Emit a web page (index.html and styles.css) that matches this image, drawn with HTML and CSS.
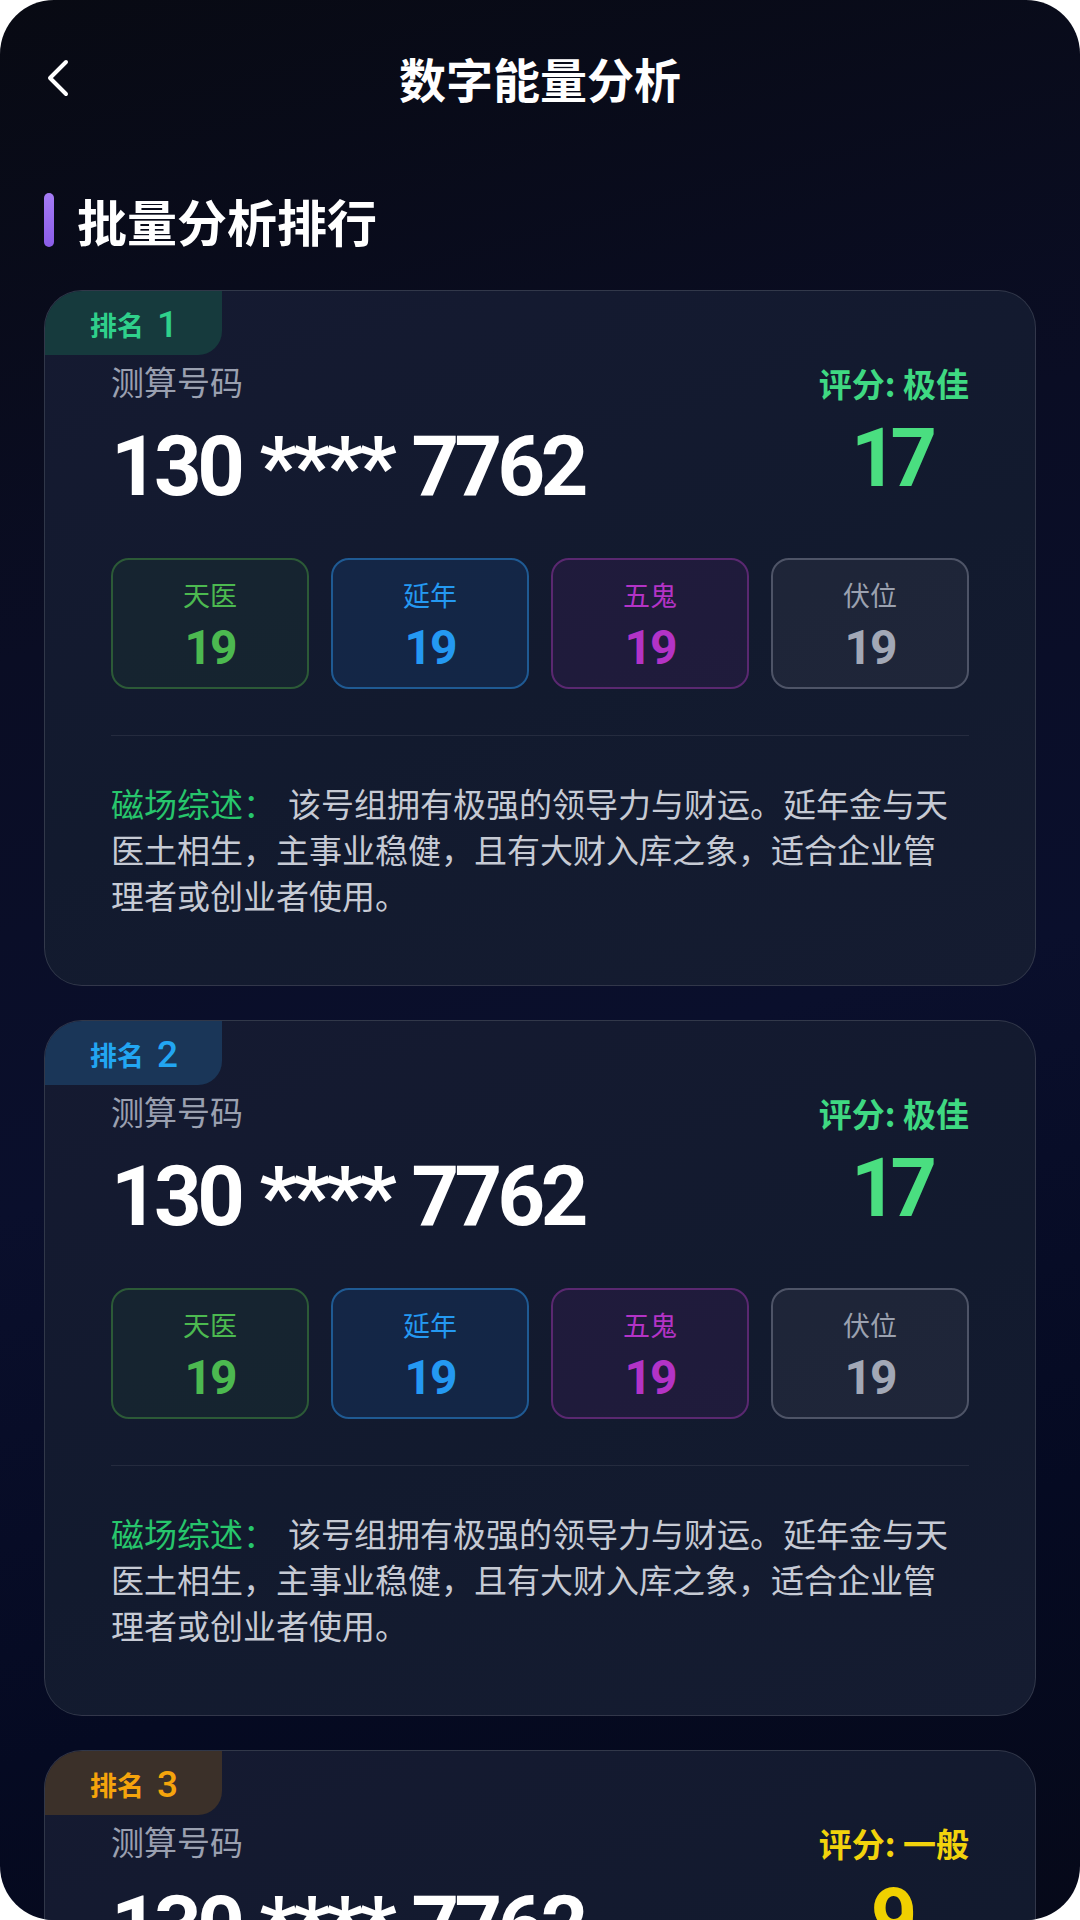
FILE: index.html
```html
<!DOCTYPE html>
<html lang="zh-CN">
<head>
<meta charset="UTF-8">
<meta name="viewport" content="width=device-width, initial-scale=1.0">
<title>数字能量分析</title>
<link rel="stylesheet" href="styles.css">
</head>
<body>

<div class="screen">
  <header class="topbar">
    <button class="back-btn" aria-label="返回">
      <svg width="26" height="38" viewBox="0 0 26 38">
        <polyline points="21,3 5,19 21,35" fill="none" stroke="#ffffff" stroke-width="4" stroke-linecap="round" stroke-linejoin="round"/>
      </svg>
    </button>
    <h1>数字能量分析</h1>
    <span></span>
  </header>

  <h2 class="section-title"><span class="section-bar"></span>批量分析排行</h2>

  <div class="rank-list">

    <div class="rank-card rank-1">
      <div class="rank-badge"><span class="badge-label">排名</span><span class="badge-num">1</span></div>
      <div class="card-top">
        <div class="phone-info">
          <div class="phone-label">测算号码</div>
          <div class="phone-number">130 **** 7762</div>
        </div>
        <div class="score score-good">
          <div class="score-label">评分: 极佳</div>
          <div class="score-value">17</div>
        </div>
      </div>
      <div class="stars">
        <div class="star star-green"><span class="star-name">天医</span><span class="star-num">19</span></div>
        <div class="star star-blue"><span class="star-name">延年</span><span class="star-num">19</span></div>
        <div class="star star-purple"><span class="star-name">五鬼</span><span class="star-num">19</span></div>
        <div class="star star-gray"><span class="star-name">伏位</span><span class="star-num">19</span></div>
      </div>
      <div class="divider"></div>
      <p class="summary"><span class="summary-label">磁场综述：</span>该号组拥有极强的领导力与财运。延年金与天医土相生，主事业稳健，且有大财入库之象，适合企业管理者或创业者使用。</p>
    </div>

    <div class="rank-card rank-2">
      <div class="rank-badge"><span class="badge-label">排名</span><span class="badge-num">2</span></div>
      <div class="card-top">
        <div class="phone-info">
          <div class="phone-label">测算号码</div>
          <div class="phone-number">130 **** 7762</div>
        </div>
        <div class="score score-good">
          <div class="score-label">评分: 极佳</div>
          <div class="score-value">17</div>
        </div>
      </div>
      <div class="stars">
        <div class="star star-green"><span class="star-name">天医</span><span class="star-num">19</span></div>
        <div class="star star-blue"><span class="star-name">延年</span><span class="star-num">19</span></div>
        <div class="star star-purple"><span class="star-name">五鬼</span><span class="star-num">19</span></div>
        <div class="star star-gray"><span class="star-name">伏位</span><span class="star-num">19</span></div>
      </div>
      <div class="divider"></div>
      <p class="summary"><span class="summary-label">磁场综述：</span>该号组拥有极强的领导力与财运。延年金与天医土相生，主事业稳健，且有大财入库之象，适合企业管理者或创业者使用。</p>
    </div>

    <div class="rank-card rank-3">
      <div class="rank-badge"><span class="badge-label">排名</span><span class="badge-num">3</span></div>
      <div class="card-top">
        <div class="phone-info">
          <div class="phone-label">测算号码</div>
          <div class="phone-number">130 **** 7762</div>
        </div>
        <div class="score score-normal">
          <div class="score-label">评分: 一般</div>
          <div class="score-value">9</div>
        </div>
      </div>
      <div class="stars">
        <div class="star star-green"><span class="star-name">天医</span><span class="star-num">9</span></div>
        <div class="star star-blue"><span class="star-name">延年</span><span class="star-num">9</span></div>
        <div class="star star-purple"><span class="star-name">五鬼</span><span class="star-num">9</span></div>
        <div class="star star-gray"><span class="star-name">伏位</span><span class="star-num">9</span></div>
      </div>
      <div class="divider"></div>
      <p class="summary"><span class="summary-label">磁场综述：</span>该号组整体平稳，吉凶参半，适合日常使用。</p>
    </div>

  </div>
</div>

</body>
</html>
```

FILE: styles.css
```css
body {
    margin: 0;
    padding: 0;
    background: #ffffff;
    font-family: "Noto Sans CJK SC", "Noto Sans", sans-serif;
  }

  .screen {
    width: 1080px;
    height: 1920px;
    overflow: hidden;
    border-radius: 54px;
    background: linear-gradient(165deg, #080a13 0%, #0a0d24 30%, #0a0f2c 55%, #050a22 80%, #060919 100%);
    color: #ffffff;
  }

  .topbar {
    height: 164px;
    box-sizing: border-box;
    display: grid;
    grid-template-columns: 1fr auto 1fr;
    align-items: center;
    padding: 0 45px 8px;
  }

  .back-btn {
    justify-self: start;
    background: none;
    border: none;
    padding: 0;
    display: flex;
  }

  .topbar h1 {
    margin: 0;
    font-size: 47px;
    font-weight: 700;
    line-height: 60px;
  }

  .section-title {
    display: flex;
    align-items: center;
    margin: 29px 0 0 44px;
    height: 54px;
    font-size: 50px;
    font-weight: 700;
    line-height: 54px;
  }

  .section-bar {
    width: 10px;
    height: 54px;
    border-radius: 5px;
    background: linear-gradient(180deg, #a57cf5, #8a5ce8);
    margin-right: 23px;
  }

  .rank-list {
    display: flex;
    flex-direction: column;
    gap: 34px;
    padding: 43px 44px 0;
  }

  .rank-card {
    position: relative;
    border: 1px solid rgba(255, 255, 255, 0.13);
    border-radius: 38px;
    overflow: hidden;
    padding: 68px 66px 67px;
    background: linear-gradient(160deg, #151a31 0%, #121a2e 55%, #151c31 100%);
  }

  .rank-badge {
    position: absolute;
    top: 0;
    left: 0;
    height: 62px;
    padding: 2px 44px 0 45px;
    display: flex;
    align-items: center;
    border-bottom-right-radius: 24px;
    font-weight: 700;
  }

  .badge-label {
    font-size: 27px;
  }

  .badge-num {
    font-family: Roboto, "Noto Sans", sans-serif;
    font-size: 37px;
    font-weight: 500;
    margin-left: 13px;
  }

  .rank-1 .rank-badge { background: #163a3d; color: #2fd08b; }
  .rank-2 .rank-badge { background: #1a3658; color: #22a6f2; }
  .rank-3 .rank-badge { background: #3b3029; color: #f5a40c; }

  .card-top {
    display: flex;
    justify-content: space-between;
    align-items: flex-start;
  }

  .phone-label {
    font-size: 33px;
    line-height: 44px;
    color: #9aa0b0;
  }

  .phone-number {
    margin-top: 22px;
    font-family: Roboto, "Noto Sans", sans-serif;
    font-size: 83px;
    line-height: 84px;
    font-weight: 700;
    letter-spacing: -4.5px;
    word-spacing: 3px;
    white-space: nowrap;
  }

  .score {
    display: flex;
    flex-direction: column;
    align-items: center;
    margin-top: 2px;
  }

  .score-label {
    font-size: 33px;
    line-height: 44px;
    font-weight: 700;
  }

  .score-value {
    margin-top: 12px;
    font-family: Roboto, "Noto Sans", sans-serif;
    font-size: 81px;
    line-height: 84px;
    font-weight: 700;
    letter-spacing: -7px;
    padding-right: 7px;
  }

  .score-good .score-label { color: #3fd982; }
  .score-good .score-value { color: #4ade80; }
  .score-normal .score-label { color: #f2d30c; }
  .score-normal .score-value { color: #f0d000; }

  .stars {
    display: grid;
    grid-template-columns: repeat(4, 1fr);
    gap: 22px;
    margin-top: 49px;
  }

  .star {
    height: 131px;
    box-sizing: border-box;
    border: 2px solid;
    border-radius: 18px;
    display: flex;
    flex-direction: column;
    align-items: center;
    padding-top: 17px;
  }

  .star-name {
    font-size: 27px;
    line-height: 36px;
  }

  .star-num {
    margin-top: 11px;
    font-family: Roboto, "Noto Sans", sans-serif;
    font-size: 48px;
    line-height: 48px;
    font-weight: 700;
    letter-spacing: -2px;
  }

  .star-green { border-color: #2c5a37; background: rgba(46, 125, 60, 0.10); color: #4cb950; }
  .star-blue { border-color: #1f5a93; background: rgba(33, 120, 230, 0.13); color: #2499f2; }
  .star-purple { border-color: #5a2870; background: rgba(150, 40, 180, 0.10); color: #b333c6; }
  .star-gray { border-color: #4e5467; background: rgba(255, 255, 255, 0.05); color: #a2a8b6; }
  .star-gray .star-name { color: #9ba1af; }

  .divider {
    height: 1px;
    margin-top: 46px;
    background: rgba(255, 255, 255, 0.08);
  }

  .summary {
    margin: 44px 8px 0 0;
    font-size: 33px;
    line-height: 46px;
    color: #c6cad4;
  }

  .summary-label {
    color: #27c66c;
    margin-right: 12px;
  }
```
